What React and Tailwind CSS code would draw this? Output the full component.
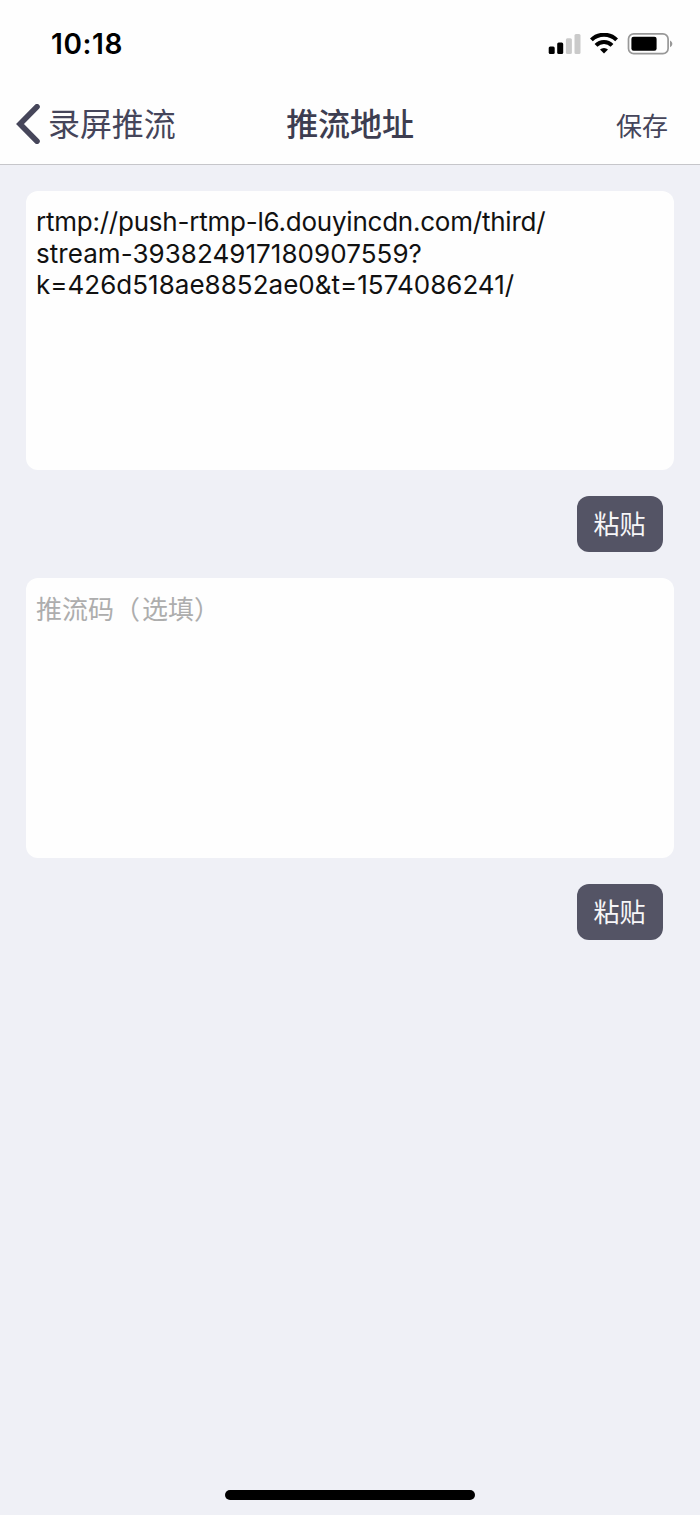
function SignalIcon() {
  return (
    <svg width="33" height="22" viewBox="0 0 33 22" className="shrink-0">
      <rect x="0.7" y="13.4" width="6" height="7.6" rx="1.5" fill="#000" />
      <rect x="9.2" y="9.6" width="6" height="11.4" rx="1.5" fill="#000" />
      <rect x="17.9" y="5.2" width="6" height="15.8" rx="1.5" fill="#cacaca" />
      <rect x="26.5" y="0.9" width="6" height="20.1" rx="1.5" fill="#cacaca" />
    </svg>
  );
}

function WifiIcon() {
  return (
    <svg width="28" height="21" viewBox="0 0 28 21" className="shrink-0">
      <g fill="none" stroke="#000" strokeWidth="4">
        <path d="M1.4 6.9 A17.9 17.9 0 0 1 26.6 6.9" />
        <path d="M6 12.4 A11.3 11.3 0 0 1 22 12.4" />
      </g>
      <path d="M14 20.6 L10 16.6 A5.8 5.8 0 0 1 18 16.6 Z" fill="#000" />
    </svg>
  );
}

function BatteryIcon() {
  return (
    <svg width="46" height="22" viewBox="0 0 46 22" className="shrink-0">
      <rect x="1.5" y="0.9" width="39.6" height="19.8" rx="5.2" fill="none" stroke="#989898" strokeWidth="1.7" />
      <rect x="4.4" y="3.8" width="25.2" height="14" rx="2.2" fill="#000" />
      <path d="M43 7.4 C46.1 8.8 46.1 12.9 43 14.3 Z" fill="#989898" />
    </svg>
  );
}

function PasteButton() {
  return (
    <button className="mr-[11.5px] flex h-14 w-[86px] items-center justify-center self-end rounded-[12px] bg-[#545465] pt-px text-[26px] leading-none text-[#f6f6f8]">
      粘贴
    </button>
  );
}

export default function App() {
  return (
    <div className="flex h-[1515px] w-[700px] flex-col bg-[#eff0f6] font-['Inter','Noto_Sans_CJK_SC',sans-serif]">
      <header className="flex h-[165px] shrink-0 flex-col border-b border-[#c6c6ca] bg-[#fefefe]">
        <div className="flex h-[87px] items-center pl-[51px] pr-[27px]">
          <span className="text-[28px] leading-none font-semibold tracking-[0.6px] text-black">10:18</span>
          <div className="ml-auto flex items-center">
            <SignalIcon />
            <span className="w-[9px]" />
            <WifiIcon />
            <span className="w-[9px]" />
            <BatteryIcon />
          </div>
        </div>
        <nav className="grid h-[73px] grid-cols-3 items-center pl-4 pr-8 text-[#45455a]">
          <button className="flex items-center text-[32px] leading-none">
            <svg width="25" height="40" viewBox="0 0 25 40" className="mr-[7px] shrink-0">
              <path d="M21 2.8 L4 20 L21 37.2" fill="none" stroke="#46465a" strokeWidth="5.6" strokeLinecap="round" strokeLinejoin="miter" />
            </svg>
            <span className="pt-0.5 tracking-[-0.1px] whitespace-nowrap">录屏推流</span>
          </button>
          <h1 className="pt-0.5 pl-4 text-center text-[32px] leading-none font-medium tracking-[-0.1px] text-[#3d3d50]">推流地址</h1>
          <button className="justify-self-end pt-1.5 text-[26px] leading-none">保存</button>
        </nav>
      </header>
      <main className="flex flex-col pl-[26px] pr-[26px] pt-[26px]">
        <section className="h-[279px] rounded-[12px] bg-[#fefefe] px-[10px] pt-[15px] text-[26px] leading-[31.5px] text-[#111]">
          <span className="block w-fit tracking-[-0.23px] whitespace-nowrap">rtmp://push-rtmp-l6.douyincdn.com/third/</span>
          <span className="block w-fit tracking-[0.05px] whitespace-nowrap">stream-393824917180907559?</span>
          <span className="block w-fit tracking-[0.02px] whitespace-nowrap">k=426d518ae8852ae0&amp;t=1574086241/</span>
        </section>
        <div className="flex flex-col py-[26px]">
          <PasteButton />
        </div>
        <section className="h-[280px] rounded-[12px] bg-[#fefefe] px-[10px] pt-4 text-[26px] leading-[31.5px] text-[#adadad]">
          推流码<span className="tracking-[2px]">（</span>选填）
        </section>
        <div className="flex flex-col pt-[26px]">
          <PasteButton />
        </div>
      </main>
      <div className="mt-auto mb-[15px] h-[10px] w-[250px] self-center rounded-full bg-black" />
    </div>
  );
}
